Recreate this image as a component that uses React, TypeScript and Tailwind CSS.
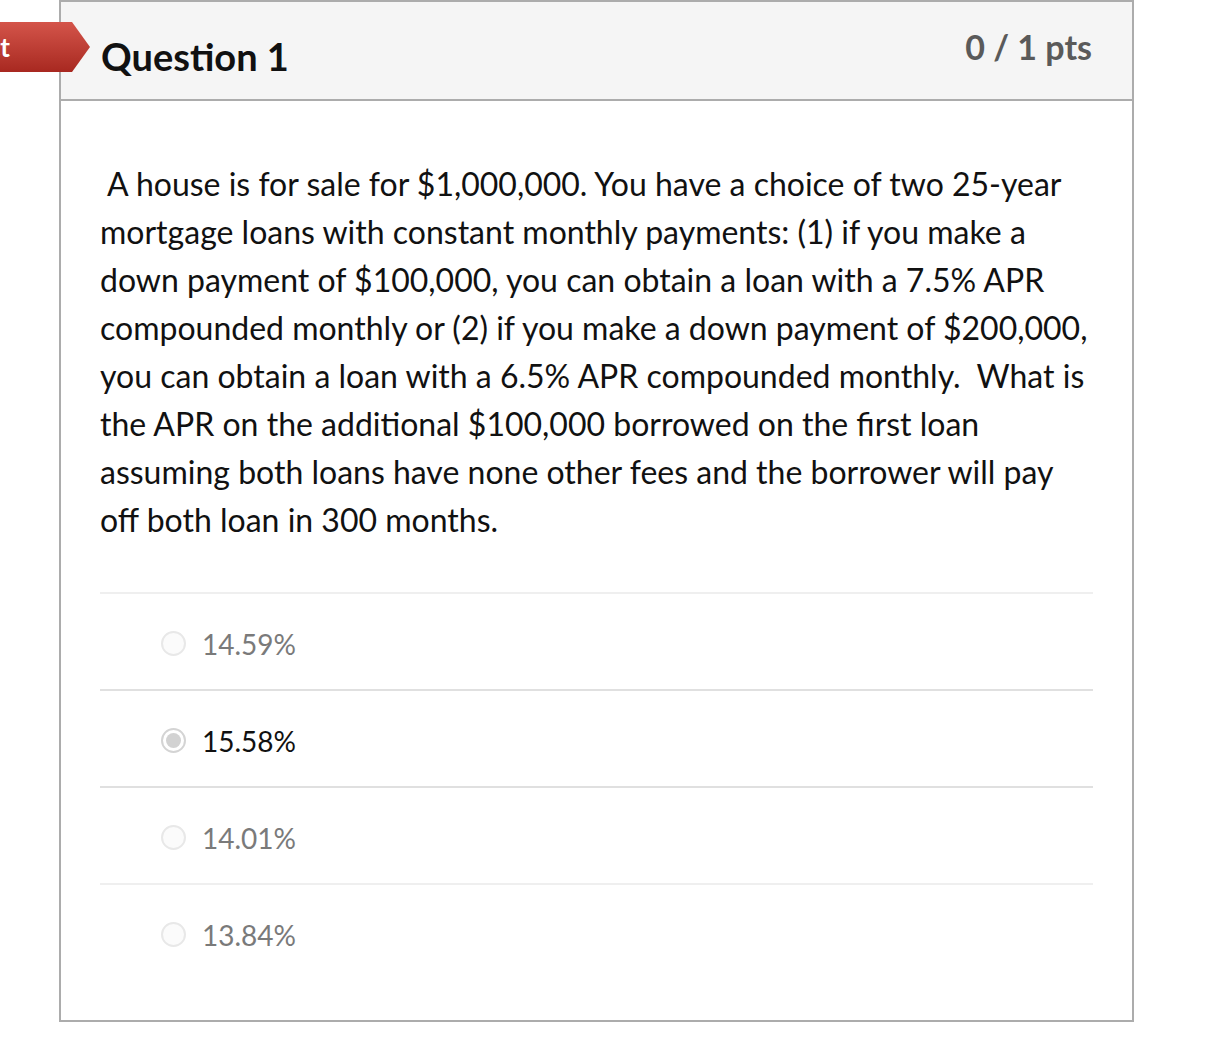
import React from 'react';

const answers = [
  { label: '14.59%', selected: false },
  { label: '15.58%', selected: true },
  { label: '14.01%', selected: false },
  { label: '13.84%', selected: false },
];

function Radio({ selected }: { selected: boolean }) {
  return (
    <span
      className={`w-[25px] h-[25px] rounded-full border-2 flex items-center justify-center shrink-0 ${
        selected ? 'border-[#d4d4d4] bg-white' : 'border-[#e8e8e8] bg-[#fbfbfb]'
      }`}
    >
      {selected && <span className="w-[15px] h-[15px] rounded-full bg-[#d2d2d2]" />}
    </span>
  );
}

export default function App() {
  return (
    <div className="min-h-screen bg-white font-['Lato',sans-serif] relative">
      {/* Result tag */}
      <div className="absolute left-0 top-[22px] h-[50px] w-[90px] overflow-hidden">
        <div className="h-full w-[90px] flex items-center justify-end pr-[80px] text-white font-bold text-[26px] bg-gradient-to-b from-[#d4544a] to-[#a82820] [clip-path:polygon(0_0,72px_0,90px_50%,72px_100%,0_100%)]">
          Incorrect
        </div>
      </div>

      <div className="ml-[59px] w-[1075px] border-2 border-[#acacac] border-t-0">
        {/* Header */}
        <div className="h-[101px] bg-[#f5f5f5] border-t-2 border-b-2 border-[#acacac] flex items-start justify-between pl-[40px] pr-[40px]">
          <h2 className="mt-[35px] text-[38px] font-bold text-[#111] leading-none">Question 1</h2>
          <div className="mt-[28px] text-[34px] font-bold text-[#5a5a5a] leading-none">0 / 1 pts</div>
        </div>

        {/* Body */}
        <div className="px-[39px] pt-[59px] pb-[40px]">
          <p className="text-[32px] leading-[48px] text-[#111]">
            &nbsp;A house is for sale for $1,000,000. You have a choice of two 25-year mortgage loans with
            constant monthly payments: (1) if you make a down payment of $100,000, you can obtain a loan
            with a 7.5% APR compounded monthly or (2) if you make a down payment of $200,000, you can
            obtain a loan with a 6.5% APR compounded monthly.&nbsp; What is the APR on the additional
            $100,000 borrowed on the first loan assuming both loans have none other fees and the borrower
            will pay off both loan in 300 months.
          </p>

          <div className="mt-[48px]">
            {answers.map((a, i) => (
              <div
                key={a.label}
                className={`h-[97px] pt-[4px] flex items-center gap-[16px] pl-[61px] border-t-2 ${
                  i === 0 || i === 3 ? 'border-[#efefef]' : 'border-[#e0e0e0]'
                }`}
              >
                <Radio selected={a.selected} />
                <span className={`text-[28px] ${a.selected ? 'text-[#111]' : 'text-[#7a7a7a]'}`}>
                  {a.label}
                </span>
              </div>
            ))}
          </div>
        </div>
      </div>
    </div>
  );
}
